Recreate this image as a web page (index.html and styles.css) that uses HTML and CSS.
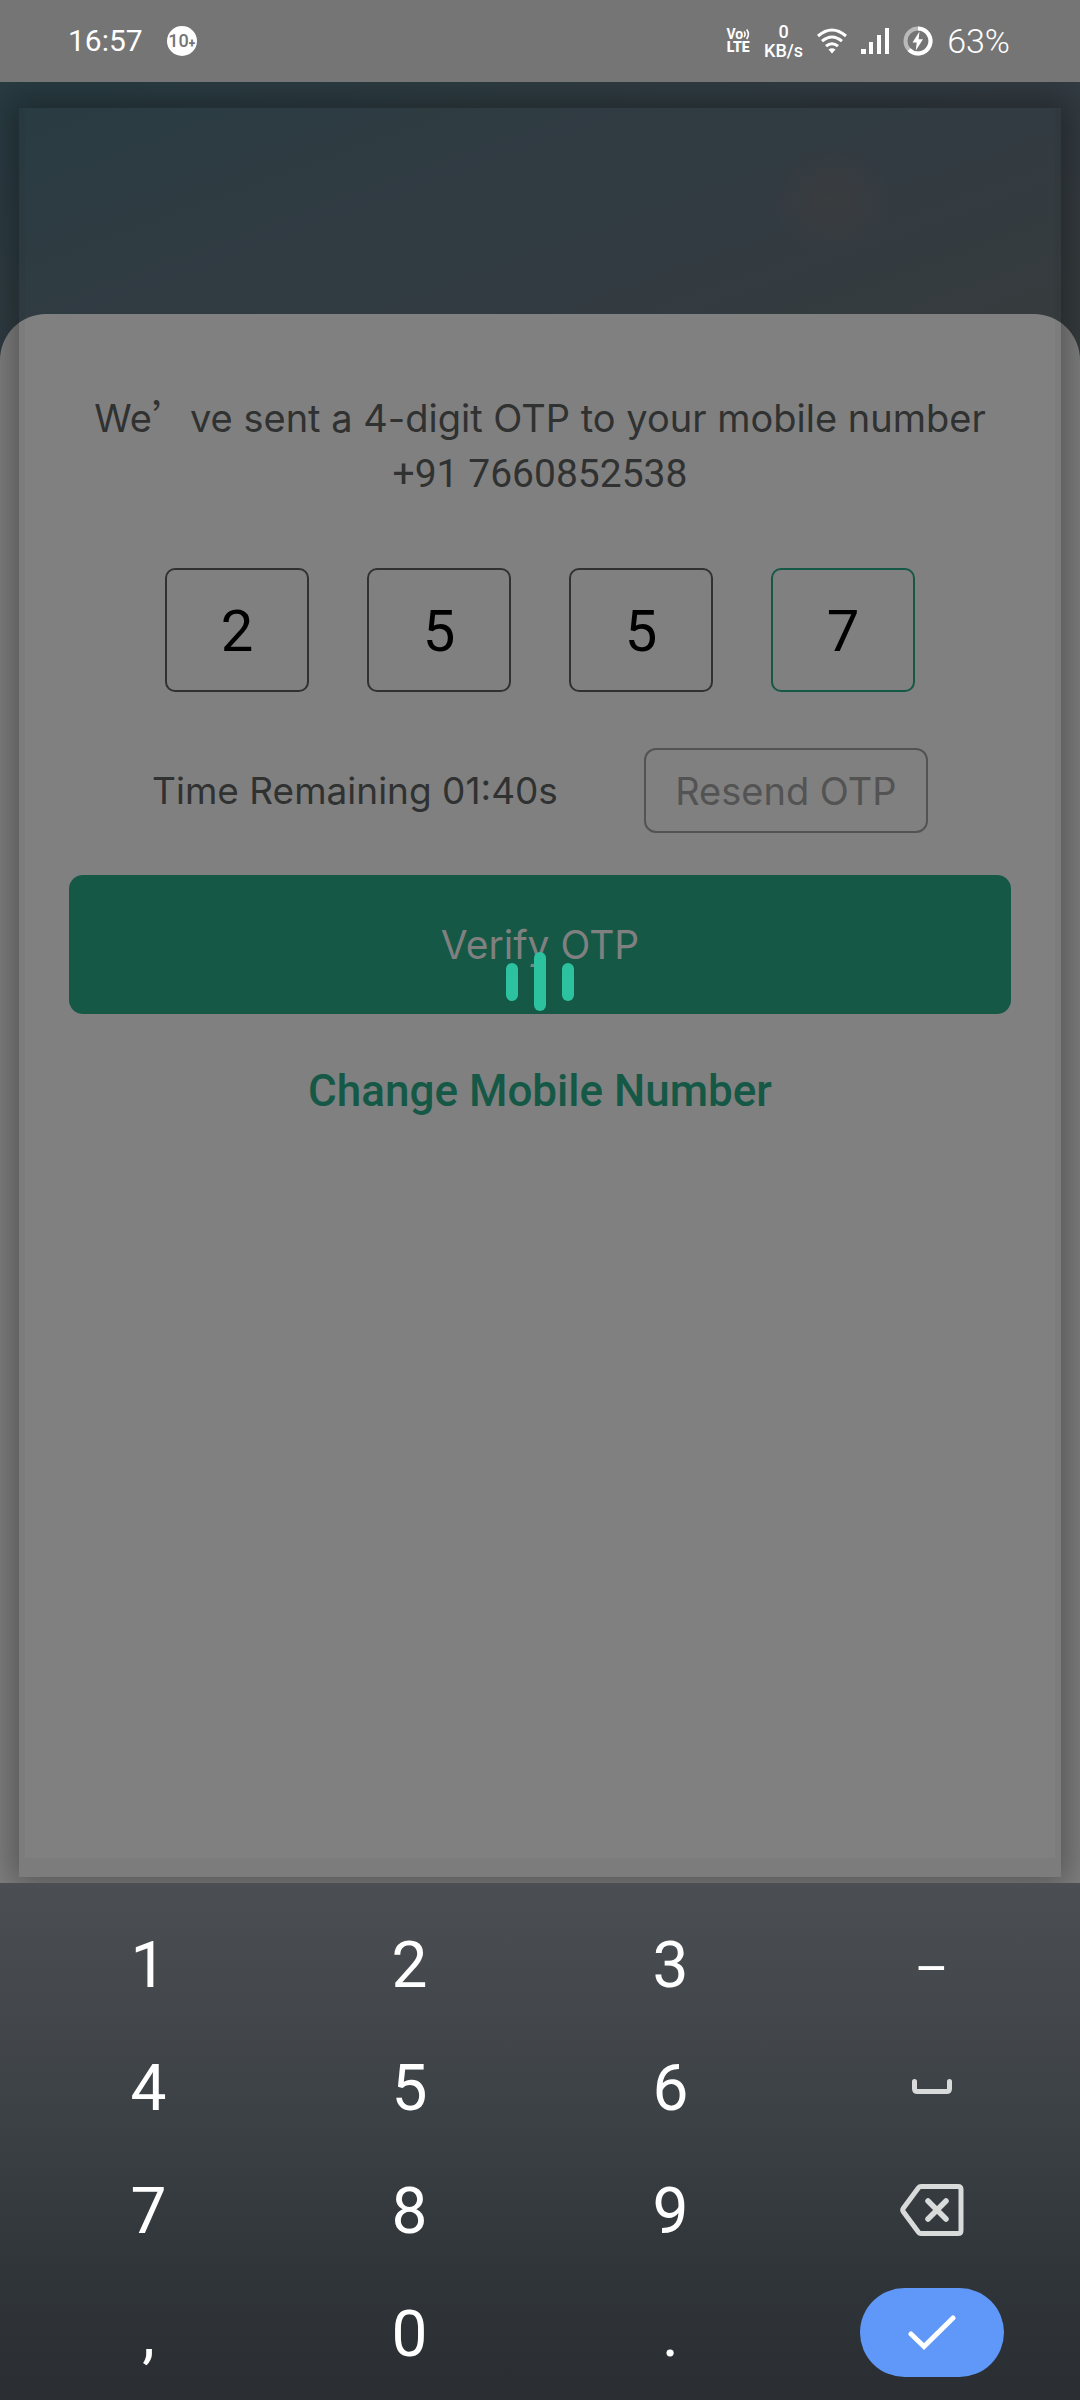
FILE: index.html
```html
<!DOCTYPE html>
<html lang="en">
<head>
<meta charset="utf-8">
<meta name="viewport" content="width=device-width, initial-scale=1">
<title>Verify OTP</title>
<link rel="stylesheet" href="styles.css">
</head>
<body>
<header class="status">
  <div class="status-group">
    <time class="clock">16:57</time>
    <span class="badge">10<b>+</b></span>
  </div>
  <div class="status-group status-right">
    <span class="volte">
      <span class="volte-top">Vo<svg width="7" height="12" viewBox="0 0 7 12" aria-hidden="true"><path d="M1 3.5Q3.2 6 1 9M3.6 1.5Q7.2 6 3.6 11" fill="none" stroke="#fff" stroke-width="1.6"/></svg></span>
      <span>LTE</span>
    </span>
    <span class="speed"><span>0</span><span>KB/s</span></span>
    <svg width="30" height="26" viewBox="0 0 30 26" aria-label="Wi-Fi">
      <g fill="none" stroke="#fff" stroke-width="3">
        <path d="M1 8Q15-4 29 8"/><path d="M5 13.2Q15 4.800 25 13.200"/><path d="M9 18.200Q15 13.200 21 18.200"/>
      </g>
      <path d="M11.500 21.500Q15 19 18.500 21.500L15 25.500Z" fill="#fff"/>
    </svg>
    <svg width="28" height="26" viewBox="0 0 28 26" aria-label="Signal"><path d="M0 21h5v5H0zM8 14h4v12H8zM16 7h4v19h-4zM24 0h4v26h-4z" fill="#fff"/></svg>
    <svg width="30" height="30" viewBox="0 0 30 30" aria-label="Charging">
      <circle cx="15" cy="15" r="12.500" fill="none" stroke="#bababa" stroke-width="4"/>
      <path d="M15 2.500A12.500 12.500 0 1 1 6 23.700" fill="none" stroke="#fff" stroke-width="4"/>
      <path d="M16.500 5.500 9.500 16.500h4.200L12.800 24.500 20 13.200h-4.400Z" fill="#fff"/>
    </svg>
    <span class="percent">63%</span>
  </div>
</header>

<main class="stage">
  <section class="sheet">
    <p class="message">We<span class="quote">’</span>ve sent a 4-digit OTP to your mobile number<br><span class="phone">+91 7660852538</span></p>
    <form class="form" onsubmit="return false">
      <div class="digits">
        <input class="digit" aria-label="Digit 1" inputmode="numeric" maxlength="1" value="2">
        <input class="digit" aria-label="Digit 2" inputmode="numeric" maxlength="1" value="5">
        <input class="digit" aria-label="Digit 3" inputmode="numeric" maxlength="1" value="5">
        <input class="digit digit-active" aria-label="Digit 4" inputmode="numeric" maxlength="1" value="7">
      </div>
      <div class="resend-row">
        <span>Time Remaining 01:40s</span>
        <button class="resend" type="button">Resend OTP</button>
      </div>
      <div class="verify-wrap">
        <button class="verify" type="submit">Verify OTP</button>
        <div class="loader" role="status" aria-label="Loading"><i></i><i class="tall"></i><i></i></div>
      </div>
    </form>
    <a class="change" href="#">Change Mobile Number</a>
  </section>
  <div class="window-frame"></div>
</main>

<section class="keypad" aria-label="Keypad">
  <button class="key">1</button><button class="key">2</button><button class="key">3</button><button class="key key-dash">–</button>
  <button class="key">4</button><button class="key">5</button><button class="key">6</button>
  <button class="key key-icon" aria-label="Space"><svg width="40" height="15" viewBox="0 0 40 15"><path d="M2.500 2.500V9.500Q2.500 12.500 5.500 12.500H34.500Q37.500 12.500 37.500 9.500V2.500" fill="none" stroke="#d9dbdb" stroke-width="5" stroke-linecap="round"/></svg></button>
  <button class="key">7</button><button class="key">8</button><button class="key">9</button>
  <button class="key key-icon" aria-label="Delete"><svg width="64" height="52" viewBox="0 0 64 52"><g fill="none" stroke="#d9dbdb" stroke-width="5" stroke-linecap="round" stroke-linejoin="round"><path d="M21 2.500H58Q61 2.500 61 5.500V46.500Q61 49.500 58 49.500H21Q19.500 49.500 18.500 48.200L3.500 28Q2 26 3.500 24L18.500 3.800Q19.500 2.500 21 2.500Z"/><path d="M28 17 46 35M46 17 28 35" stroke-width="5.500"/></g></svg></button>
  <button class="key">,</button><button class="key">0</button><button class="key">.</button>
  <button class="key key-icon" aria-label="Done"><span class="done"><svg width="48" height="36" viewBox="0 0 48 36"><path d="M3 19 16 31.500 45 3" fill="none" stroke="#fff" stroke-width="5" stroke-linecap="round" stroke-linejoin="miter"/></svg></span></button>
</section>
</body>
</html>
```
FILE: styles.css
```css
* {
  box-sizing: border-box;
}

body {
  margin: 0;
  min-height: 100vh;
  display: flex;
  flex-direction: column;
  background: #808080;
  font-family: Roboto, "Liberation Sans", sans-serif;
}

button,
input {
  font-family: inherit;
  margin: 0;
}

svg {
  display: block;
}

/* Status bar */
.status {
  height: 82px;
  padding: 0 70px 0 68px;
  display: flex;
  align-items: center;
  justify-content: space-between;
  background: #757575;
  color: #fff;
}

.status-group {
  display: flex;
  align-items: center;
  gap: 24px;
}

.status-right {
  gap: 14px;
}

.clock {
  font-size: 30px;
  line-height: 40px;
}

.percent {
  font-size: 34px;
  font-weight: 300;
  line-height: 40px;
}

.badge {
  width: 30px;
  height: 30px;
  border-radius: 50%;
  display: flex;
  align-items: baseline;
  justify-content: center;
  background: #fff;
  color: #757575;
  font-size: 18px;
  font-weight: 500;
  line-height: 30px;
}

.badge b {
  font-size: 12px;
  font-weight: 900;
}

.volte {
  display: flex;
  flex-direction: column;
  align-items: center;
  font-size: 14px;
  font-weight: 900;
  line-height: 13px;
}

.volte-top {
  display: flex;
  font-weight: 700;
}

.speed {
  display: flex;
  flex-direction: column;
  align-items: center;
  font-size: 18px;
  font-weight: 500;
  line-height: 19px;
}

/* App window */
.stage {
  position: relative;
  flex: 1;
  display: flex;
  flex-direction: column;
  padding-top: 232px;
  overflow: hidden;
  background:
    radial-gradient(ellipse 60px 56px at 77% 118px, #3a3c3e, transparent),
    linear-gradient(160deg, #283c42 0, #2f3c42 200px, #333b42 400px, #363c3e 560px);
}

.sheet {
  flex: 1;
  display: flex;
  flex-direction: column;
  align-items: center;
  padding: 77px 69px 40px;
  border-radius: 46px 46px 0 0;
  background: #808080;
  color: #303131;
  font-family: Inter, Roboto, sans-serif;
}

.window-frame {
  position: absolute;
  inset: 26px 19px 6px;
  border: solid rgba(0, 0, 0, 0.03);
  border-width: 0 6px 19px;
  box-shadow: 0 0 32px 8px rgba(0, 0, 0, 0.34);
  pointer-events: none;
}

.message {
  margin: 0;
  font-size: 38px;
  line-height: 55px;
  text-align: center;
}

.quote {
  font-family: "Noto Sans CJK SC", sans-serif;
  line-height: 1;
}

.phone {
  font-family: Roboto, sans-serif;
  font-size: 39px;
}

.form {
  width: 100%;
  margin-top: 66px;
  display: flex;
  flex-direction: column;
  align-items: center;
}

.digits {
  display: flex;
  gap: 58px;
}

.digit {
  width: 144px;
  height: 124px;
  padding: 2px 0 0;
  border: 2px solid #303131;
  border-radius: 10px;
  background: transparent;
  color: #000;
  font-family: Roboto, sans-serif;
  font-size: 58px;
  text-align: center;
  outline: none;
}

.digit-active {
  border-color: #155846;
}

.resend-row {
  display: flex;
  align-items: center;
  gap: 86px;
  margin: 56px 0 42px;
  font-size: 37px;
}

.resend {
  width: 284px;
  height: 85px;
  padding: 0;
  border: 2px solid #535353;
  border-radius: 12px;
  background: transparent;
  color: #535353;
  font-size: 38px;
}

.verify-wrap {
  position: relative;
  width: 100%;
}

.verify {
  display: block;
  width: 100%;
  height: 139px;
  border: 0;
  border-radius: 14px;
  background: #155846;
  color: #808080;
  font-size: 39px;
}

.loader {
  position: absolute;
  left: 0;
  right: 0;
  bottom: 3px;
  display: flex;
  align-items: center;
  justify-content: center;
  gap: 16px;
}

.loader i {
  width: 12px;
  height: 38px;
  border-radius: 6px;
  background: #2dc29f;
}

.loader .tall {
  height: 59px;
}

.change {
  margin-top: 50px;
  color: #155846;
  font-family: Roboto, sans-serif;
  font-size: 44px;
  font-weight: 500;
  line-height: 54px;
  text-decoration: none;
}

/* Keypad */
.keypad {
  display: grid;
  grid-template-columns: repeat(4, 1fr);
  grid-auto-rows: 123px;
  padding: 19px 18px 6px;
  background: linear-gradient(#4b4f53, #3c4145 45%, #2f3438 78%, #2a2e32);
}

.key {
  display: flex;
  align-items: center;
  justify-content: center;
  padding: 4px 0 0;
  border: 0;
  background: transparent;
  color: #fff;
  font-size: 64px;
  line-height: 76px;
}

.key-icon {
  padding: 0;
}

.key-dash {
  padding-top: 12px;
  font-size: 52px;
}

.done {
  width: 144px;
  height: 89px;
  border-radius: 45px;
  display: flex;
  align-items: center;
  justify-content: center;
  background: #5f98f8;
}
```
